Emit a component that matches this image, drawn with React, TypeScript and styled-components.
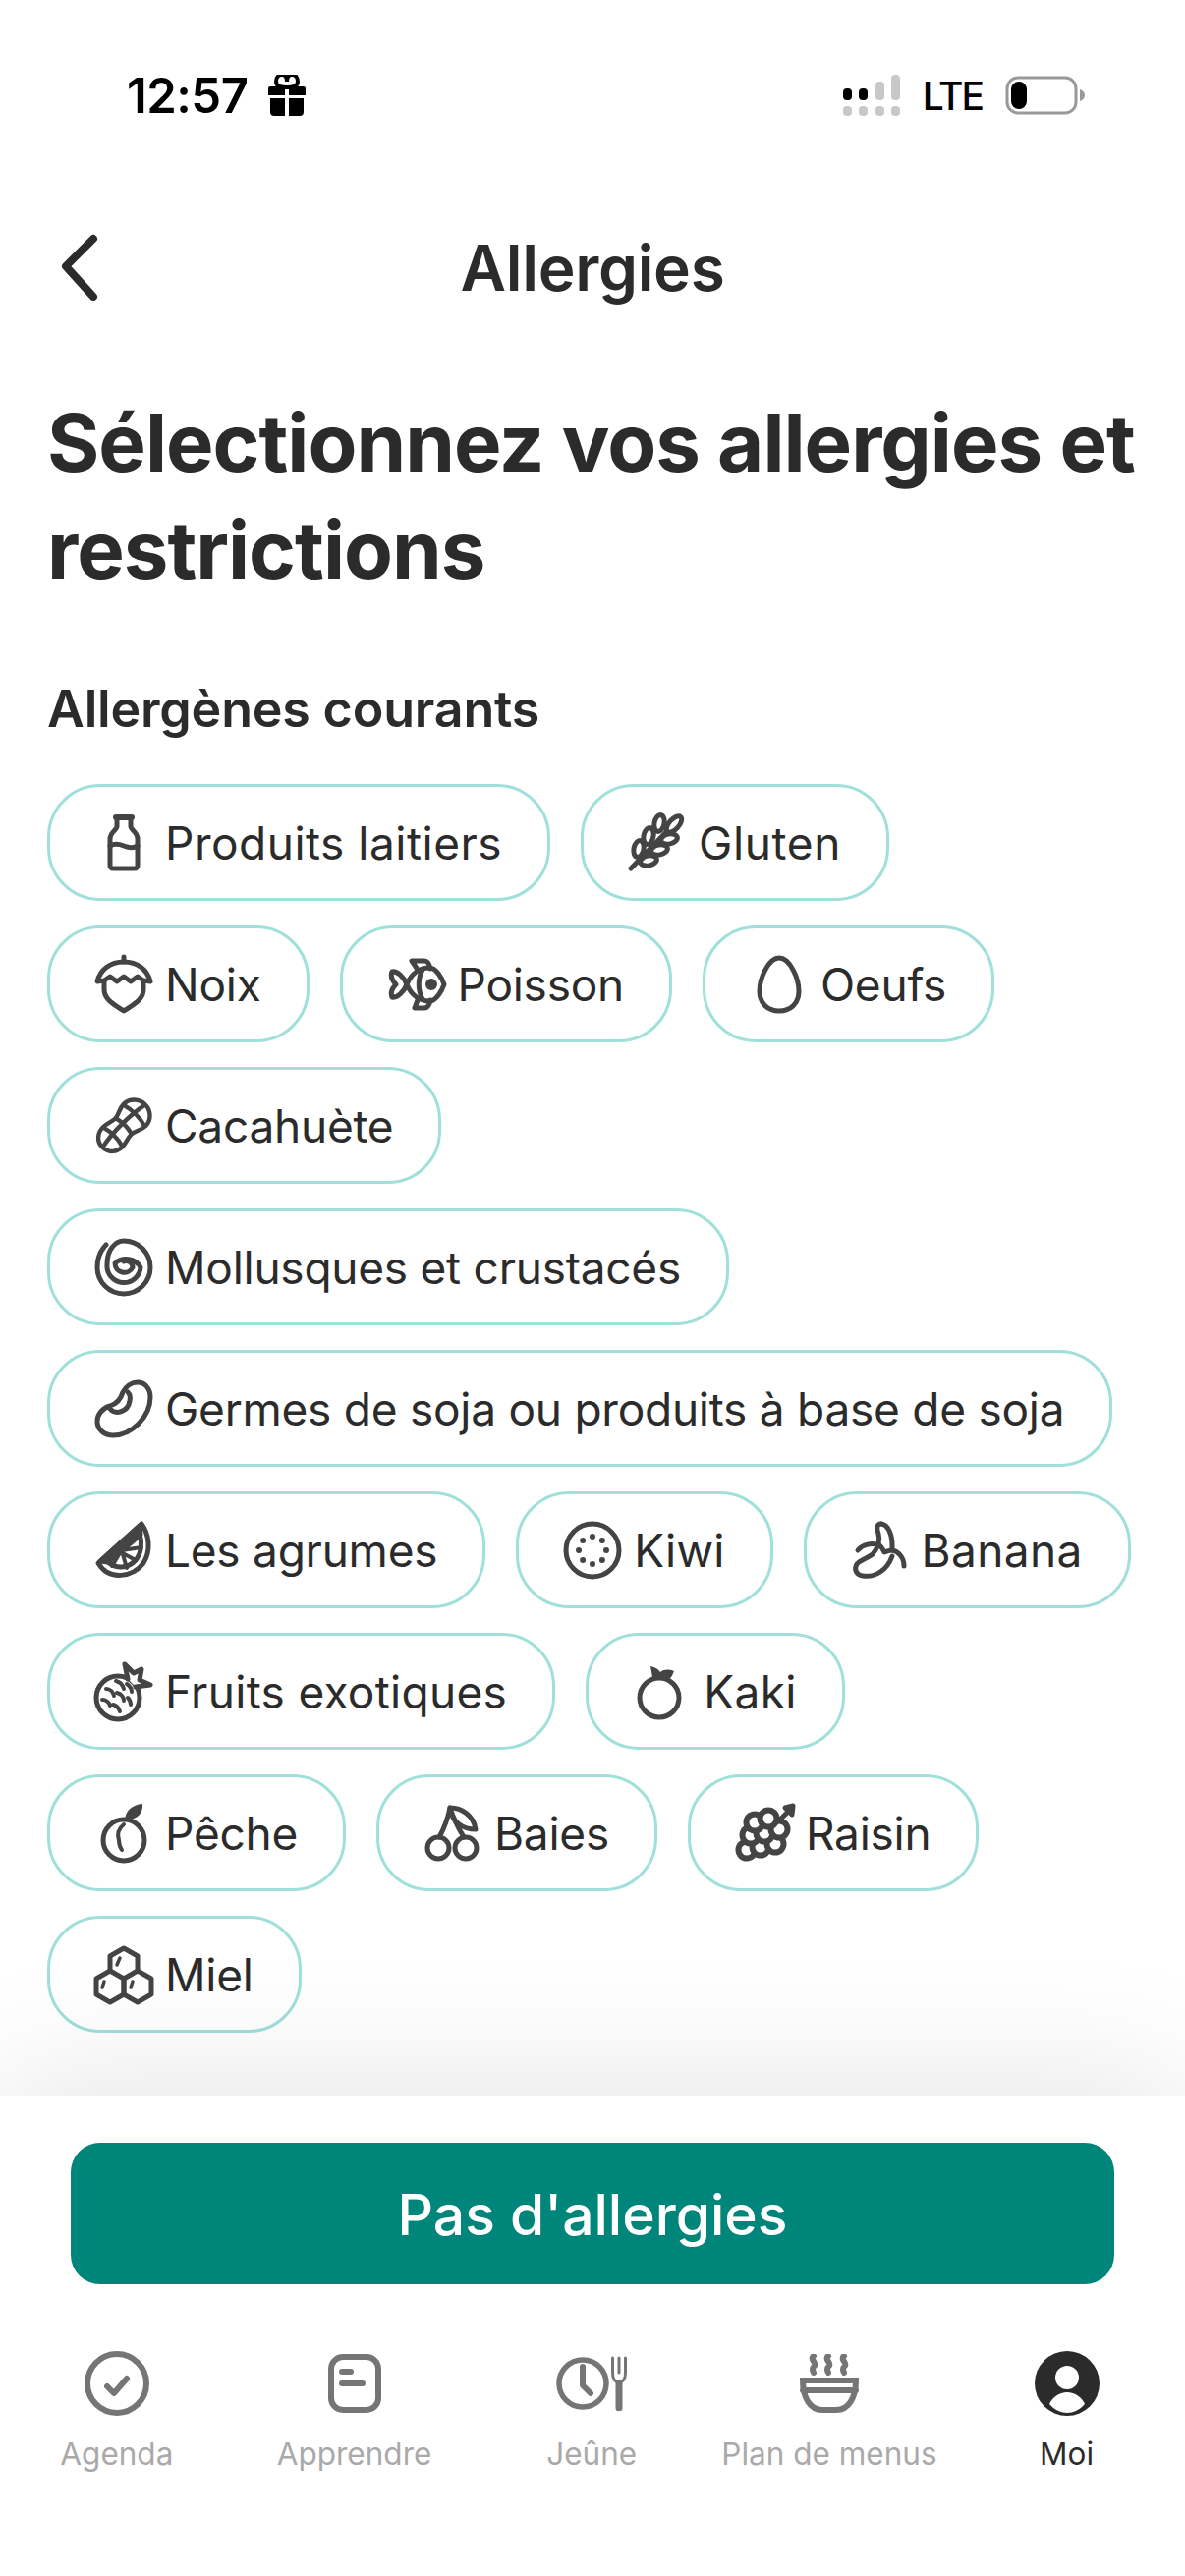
import * as React from 'react';
import styled, { createGlobalStyle } from 'styled-components';

const GlobalStyle = createGlobalStyle`
	html, body {
		margin: 0;
		padding: 0;
		background: #fff;
		font-family: Inter, "Liberation Sans", sans-serif;
	}
`;

const Page = styled.div`
	width: 1206px;
	height: 2622px;
	display: flex;
	flex-direction: column;
	overflow: hidden;
	background: #fff;
	color: #2b2b2b;
`;

const StatusBar = styled.div`
	height: 212px;
	box-sizing: border-box;
	padding: 76px 101px 0 129px;
	display: flex;
	justify-content: space-between;
	align-items: flex-start;
	color: #000;
`;

const StatusGroup = styled.div`
	display: flex;
	align-items: center;
	height: 42px;
`;

const Time = styled.span`
	font-size: 49px;
	font-weight: 600;
	letter-spacing: -0.5px;
	margin-right: 20px;
`;

const Carrier = styled.span`
	font-size: 39px;
	font-weight: 500;
	letter-spacing: -2px;
	margin: 0 23px 0 23px;
`;

const Header = styled.div`
	height: 120px;
	padding: 0 48px;
	display: flex;
	align-items: center;
	justify-content: center;
	position: relative;
`;

const BackButton = styled.svg`
	position: absolute;
	left: 60px;
	top: 26px;
`;

const HeaderTitle = styled.h1`
	margin: 0;
	font-size: 64px;
	font-weight: 600;
	letter-spacing: -0.3px;
`;

const Content = styled.div`
	flex: 1;
	min-height: 0;
	padding: 64px 48px 0;
`;

const Title = styled.h2`
	margin: 0;
	font-size: 81.5px;
	line-height: 109px;
	font-weight: 700;
	letter-spacing: -1px;
`;

const SectionTitle = styled.h3`
	margin: 73px 0 41px;
	font-size: 52px;
	line-height: 70px;
	font-weight: 600;
	letter-spacing: -0.2px;
`;

const ChipList = styled.div`
	display: flex;
	flex-wrap: wrap;
	gap: 25px 31px;
`;

const Chip = styled.div`
	height: 119px;
	box-sizing: border-box;
	padding: 0 46px 0 45px;
	display: flex;
	align-items: center;
	gap: 12px;
	border: 3px solid #a0e0da;
	border-radius: 54px;
	font-size: 46px;
	white-space: nowrap;
`;

const ChipLabel = styled.span<{ $tracking?: number }>`
	letter-spacing: ${props => props.$tracking ?? -0.25}px;
`;

const ChipIcon = styled.svg.attrs({ viewBox: '0 0 60 60', width: 60, height: 60, fill: 'none' })`
	flex: none;
	stroke: #444;
	stroke-width: 5;
	stroke-linecap: round;
	stroke-linejoin: round;
	overflow: visible;
`;

const Footer = styled.div`
	position: relative;
	height: 489px;
	box-sizing: border-box;
	padding-top: 48px;
	background: #fff;
	box-shadow: 0 0 140px rgba(0, 0, 0, 0.126);
`;

const MainButton = styled.button`
	display: block;
	width: 1062px;
	height: 144px;
	margin: 0 auto;
	padding: 2px 0 0;
	border: 0;
	border-radius: 30px;
	background: #00857a;
	color: #fff;
	font-family: inherit;
	font-size: 57px;
	font-weight: 500;
`;

const TabBar = styled.div`
	display: grid;
	grid-template-columns: repeat(5, 241.7px);
	margin-left: -2px;
	padding-top: 68px;
`;

const Tab = styled.div<{ $active?: boolean }>`
	display: flex;
	flex-direction: column;
	align-items: center;
	color: ${props => props.$active ? '#2b2b2b' : '#a9a9a9'};
	font-size: 31.5px;
	line-height: 40px;
`;

const TabIconBox = styled.div`
	height: 66px;
	display: flex;
	align-items: center;
	justify-content: center;
	margin-bottom: 19px;
`;

const TabStroke = styled.svg`
	fill: none;
	stroke: #757575;
	stroke-width: 6;
	stroke-linecap: round;
	stroke-linejoin: round;
`;

const Dim = '#444';

const Bottle = () => (
	<ChipIcon>
		<path d="M22 4h16" strokeWidth="6" />
		<path d="M23 5v8c0 4-7 6-7 13v27a3 3 0 0 0 3 3h22a3 3 0 0 0 3-3V26c0-7-7-9-7-13V5" />
		<path d="M16 33c5-3 9-2 14 0s9 3 14 0" />
	</ChipIcon>
);

const Wheat = () => {
	const leftRow = [[11, 36], [21, 23], [32, 10]];
	const rightRow = [[21, 48], [32, 37], [42, 26]];
	return (
		<ChipIcon>
			<path d="M3 56 40 18" />
			{leftRow.map(([x, y]) => (
				<ellipse key={`l${x}`} cx={x} cy={y} rx="5" ry="8.500" fill="#fff" transform={`rotate(12 ${x} ${y})`} />
			))}
			{rightRow.map(([x, y]) => (
				<ellipse key={`r${x}`} cx={x} cy={y} rx="8.500" ry="5" fill="#fff" transform={`rotate(-12 ${x} ${y})`} />
			))}
			<ellipse cx="47" cy="11" rx="5" ry="10" fill="#fff" transform="rotate(42 47 11)" />
		</ChipIcon>
	);
};

const Nut = () => (
	<ChipIcon>
		<path d="M30 2v5" />
		<path d="M3 27C6 15 16 7 30 7s24 8 27 20l-7-1-6-4-7 5-7-5-7 5-7-5-6 4Z" />
		<path d="M10 27v8c0 11 11 16 20 22 9-6 20-11 20-22v-8" />
	</ChipIcon>
);

const Fish = () => (
	<ChipIcon>
		<path d="M20 30C25 18 34 13 43 13c7 0 13 11 15 17-2 6-8 17-15 17-9 0-18-5-23-17Z" />
		<path d="M36 15c-5 9-5 21 0 30" />
		<circle cx="45" cy="30" r="3.500" fill={Dim} />
		<path d="M20 30C17 22 10 16 5 17c-2 5 0 9 4 13-4 4-6 8-4 13 5 1 12-5 15-13Z" />
		<path d="M31 15 25 6h13c3 0 5 3 6 8" />
		<path d="M31 46l-3 8h10c3 0 5-3 6-8" />
	</ChipIcon>
);

const Egg = () => (
	<ChipIcon>
		<path d="M30 3C19 3 10 24 10 37c0 13 9 20 20 20s20-7 20-20C50 24 41 3 30 3Z" />
	</ChipIcon>
);

const Peanut = () => (
	<ChipIcon>
		<g transform="translate(30 30) rotate(-45) scale(.88) translate(-30 -30)">
			<path d="M-5 30C-5 20 3 14 12 14c6 0 11 3 17 3s11-5 19-5c9 0 17 8 17 18s-8 18-17 18c-8 0-13-5-19-5s-11 3-17 3C3 46-5 40-5 30Z" />
			<path d="M-4 30C15 26 45 26 64 30" />
			<path d="M12 15c3 10 3 20 0 30" />
			<path d="M30 18c2 8 2 16 0 24" />
			<path d="M47 13c3 11 3 23 0 34" />
		</g>
	</ChipIcon>
);

const Shell = () => (
	<ChipIcon>
		<path d="M12 7C6 13 3 21 3 30A27 27 0 0 0 57 30C57 15 45 3 30 3 22 3 13 11 13 27A17 17 0 0 0 47 30 17 17 0 0 0 21 26 9.500 9.500 0 0 0 39 30C39 26 35 22 30 24" />
	</ChipIcon>
);

const Bean = () => (
	<ChipIcon>
		<path d="M29 13C32 7 38 3 44 3c8 0 13 7 13 15 0 20-19 39-38 39-9 0-16-6-16-14 0-8 6-14 13-16 6-2 11-7 13-14Z" />
		<path d="M16 30c5 6 18 4 20-8 1-4 0-7-2-9" />
	</ChipIcon>
);

const Citrus = () => (
	<ChipIcon>
		<path d="M4 43 48 3c8 11 10 27 2 40C40 57 15 62 4 43Z" />
		<path d="M14 42 46 13c3 9 2 20-4 27-8 9-20 9-28 2Z" />
		<path d="M6 41 46 5l1 9-33 28Z" fill={Dim} />
		<path d="M27 32 42 40M28 31 33 48M28 30 48 27M27 31 18 46" strokeWidth="4" />
	</ChipIcon>
);

const Kiwi = () => {
	const dots = [0, 45, 90, 135, 180, 225, 270, 315];
	return (
		<ChipIcon strokeWidth="5.500">
			<circle cx="30" cy="30" r="27" />
			{dots.map(a => (
				<circle
					key={a}
					cx={30 + 14 * Math.cos(a * Math.PI / 180)}
					cy={30 + 14 * Math.sin(a * Math.PI / 180)}
					r="3"
					fill={Dim}
					stroke="none"
				/>
			))}
		</ChipIcon>
	);
};

const Banana = () => (
	<ChipIcon>
		<path d="M31 3c-5 0-5 5-3 10 2 7-1 15-6 21-5 4-13 6-16 10-3 5-1 11 6 12 13 2 25-6 30-20" />
		<path d="M31 3c7 1 11 11 11 22 0 2 0 3 0 5 6 1 12 7 12 16" />
		<path d="M7 30c5-6 14-8 22-5 2 1 4 5 5 7 3-1 5-2 8-2" />
	</ChipIcon>
);

const Exotic = () => (
	<ChipIcon strokeWidth="4.500">
		<circle cx="24" cy="36" r="22" />
		<path d="M34 17 31 2l9 9 8-4-2 11 11 5-15 2" fill="#fff" />
		<path d="M22 19c4 1 7 4 8 8M33 22c3 2 5 5 5 8M12 27c4 0 7 3 8 7M23 31c4 1 7 4 7 8M34 36c2 2 3 4 3 7M8 38c4 0 7 3 8 6M19 43c4 1 6 4 7 7" strokeWidth="4" />
	</ChipIcon>
);

const Kaki = () => (
	<ChipIcon>
		<circle cx="27" cy="36" r="20" />
		<path d="M18 4c5 1 8 3 10 6 4-3 9-3 14-1-2 5-4 8-7 10-5-2-11-2-15 0 0-5-1-10-2-15Z" fill={Dim} stroke="none" />
	</ChipIcon>
);

const Peach = () => (
	<ChipIcon>
		<circle cx="30" cy="37" r="21" />
		<path d="M25 37c-2-6 0-12 5-16M25 37c0 4 1 7 3 10" strokeWidth="4" />
		<path d="M31 16C32 7 38 1 49 0c1 9-5 17-18 16Z" fill={Dim} stroke="none" />
	</ChipIcon>
);

const Cherries = () => (
	<ChipIcon>
		<circle cx="15" cy="45" r="11" />
		<circle cx="43" cy="45" r="11" />
		<path d="M16 34C21 25 25 14 27 4c3 10 8 20 14 30" />
		<path d="M27 4c12 0 24 8 26 22-12 0-24-6-26-22Z" />
	</ChipIcon>
);

const Grapes = () => {
	const holes = [[12, 47], [26, 44], [41, 41], [16, 32], [30, 30], [45, 26], [20, 19], [34, 15]];
	return (
		<ChipIcon>
			<path d="M47 15 58 4" />
			<path d="M51 4l8-2-1 9Z" fill={Dim} />
			{holes.map(([x, y]) => <circle key={`${x}-${y}`} cx={x} cy={y} r="8.500" fill="#fff" strokeWidth="6" />)}
		</ChipIcon>
	);
};

const Honey = () => (
	<ChipIcon strokeLinejoin="miter">
		<path d="M30 3 44 11V26L30 34 16 26V11Z" />
		<path d="M16 26 2 34V50L16 58 30 50V34" />
		<path d="M44 26 58 34V50L44 58 30 50V34" />
		<path d="M26 13 23 20M10 37 8 43M39 37 37 43" strokeWidth="3.500" />
	</ChipIcon>
);

const allergens: { label: string; Icon: () => React.ReactElement; tracking?: number }[] = [
	{ label: 'Produits laitiers', Icon: Bottle, tracking: 0.5 },
	{ label: 'Gluten', Icon: Wheat, tracking: 0.6 },
	{ label: 'Noix', Icon: Nut },
	{ label: 'Poisson', Icon: Fish },
	{ label: 'Oeufs', Icon: Egg },
	{ label: 'Cacahuète', Icon: Peanut },
	{ label: 'Mollusques et crustacés', Icon: Shell },
	{ label: 'Germes de soja ou produits à base de soja', Icon: Bean },
	{ label: 'Les agrumes', Icon: Citrus },
	{ label: 'Kiwi', Icon: Kiwi, tracking: 0.2 },
	{ label: 'Banana', Icon: Banana, tracking: 0.35 },
	{ label: 'Fruits exotiques', Icon: Exotic, tracking: 0.3 },
	{ label: 'Kaki', Icon: Kaki, tracking: 0.4 },
	{ label: 'Pêche', Icon: Peach },
	{ label: 'Baies', Icon: Cherries },
	{ label: 'Raisin', Icon: Grapes },
	{ label: 'Miel', Icon: Honey },
];

const Gift = () => (
	<svg width="40" height="42" viewBox="0 0 40 42">
		<path d="M20 13C15 13 9 12 9 7s3-7 6-7c3 0 5 3 5 7 0-4 2-7 5-7s6 2 6 7-6 6-11 6Z" fill="none" stroke="#000" strokeWidth="4" />
		<path d="M3 12h15v9H1v-7a2 2 0 0 1 2-2ZM22 12h15a2 2 0 0 1 2 2v7H22ZM3 24h15v18H7a4 4 0 0 1-4-4ZM22 24h15v14a4 4 0 0 1-4 4H22Z" fill="#000" />
	</svg>
);

const Signal = () => (
	<svg width="58" height="42" viewBox="0 0 58 42">
		<rect x="0" y="14" width="9" height="12" rx="4" fill="#000" />
		<rect x="16" y="14" width="9" height="12" rx="4" fill="#000" />
		<rect x="33" y="7" width="9" height="19" rx="4" fill="#c8c8c8" />
		<rect x="49" y="0" width="9" height="26" rx="4" fill="#c8c8c8" />
		<rect x="0" y="32" width="9" height="10" rx="4" fill="#c8c8c8" />
		<rect x="16" y="32" width="9" height="10" rx="4" fill="#c8c8c8" />
		<rect x="33" y="32" width="9" height="10" rx="4" fill="#c8c8c8" />
		<rect x="49" y="32" width="9" height="10" rx="4" fill="#c8c8c8" />
	</svg>
);

const Battery = () => (
	<svg width="82" height="42" viewBox="0 0 82 42">
		<rect x="2" y="3" width="70" height="36" rx="11" fill="none" stroke="#999" strokeWidth="3" />
		<rect x="6" y="7" width="16" height="28" rx="8" fill="#000" />
		<path d="M76 15c3 1 5 3 5 6s-2 5-5 6Z" fill="#999" />
	</svg>
);

const AgendaIcon = () => (
	<TabStroke width="66" height="66" viewBox="0 0 66 66">
		<circle cx="33" cy="33" r="30" />
		<path d="M23 36l7 7 13-15" />
	</TabStroke>
);

const LearnIcon = () => (
	<TabStroke width="54" height="60" viewBox="0 0 54 60">
		<rect x="3" y="3" width="48" height="54" rx="12" />
		<path d="M14 18h9M14 30h21" />
	</TabStroke>
);

const FastIcon = () => (
	<TabStroke width="72" height="56" viewBox="0 0 72 56">
		<circle cx="27" cy="28" r="24" strokeWidth="5.500" />
		<path d="M27 11v19l8 8" />
		<path d="M64 28v25" strokeWidth="7" />
		<path d="M57.500 2v15c0 7 3 10 6.500 10s6.500-3 6.500-10V2M64 2v15" strokeWidth="3" />
	</TabStroke>
);

const MenuIcon = () => (
	<TabStroke width="60" height="60" viewBox="0 0 60 60">
		<path d="M14 2c-5 4 5 7 0 11-2 2-1 4 0 6M29 2c-5 4 5 7 0 11-2 2-1 4 0 6M45 2c-5 4 5 7 0 11-2 2-1 4 0 6" />
		<path d="M3 27h54c0 17-7 30-20 30H23C10 57 3 44 3 27ZM3 37h54" strokeLinejoin="miter" />
	</TabStroke>
);

const ProfileIcon = () => (
	<svg width="66" height="66" viewBox="0 0 66 66">
		<circle cx="33" cy="33" r="33" fill="#2b2b2b" />
		<circle cx="33" cy="27" r="12" fill="#fff" />
		<path d="M15 54c3-7 10-12 18-12s15 5 18 12c-5 6-12 9-18 9s-13-3-18-9Z" fill="#fff" />
	</svg>
);

const tabs = [
	{ label: 'Agenda', Icon: AgendaIcon },
	{ label: 'Apprendre', Icon: LearnIcon },
	{ label: 'Jeûne', Icon: FastIcon },
	{ label: 'Plan de menus', Icon: MenuIcon },
	{ label: 'Moi', Icon: ProfileIcon, active: true },
];

const App = () => (
	<Page>
		<GlobalStyle />
		<StatusBar>
			<StatusGroup>
				<Time>12:57</Time>
				<Gift />
			</StatusGroup>
			<StatusGroup>
				<Signal />
				<Carrier>LTE</Carrier>
				<Battery />
			</StatusGroup>
		</StatusBar>
		<Header>
			<BackButton width="44" height="68" viewBox="0 0 44 68" fill="none" stroke="#2b2b2b" strokeWidth="8" strokeLinecap="round" strokeLinejoin="round">
				<path d="M35 5 7 33l28 31" />
			</BackButton>
			<HeaderTitle>Allergies</HeaderTitle>
		</Header>
		<Content>
			<Title>Sélectionnez vos allergies et restrictions</Title>
			<SectionTitle>Allergènes courants</SectionTitle>
			<ChipList>
				{allergens.map(({ label, Icon, tracking }) => (
					<Chip key={label}>
						<Icon />
						<ChipLabel $tracking={tracking}>{label}</ChipLabel>
					</Chip>
				))}
			</ChipList>
		</Content>
		<Footer>
			<MainButton>Pas d'allergies</MainButton>
			<TabBar>
				{tabs.map(({ label, Icon, active }) => (
					<Tab key={label} $active={active}>
						<TabIconBox><Icon /></TabIconBox>
						<span>{label}</span>
					</Tab>
				))}
			</TabBar>
		</Footer>
	</Page>
);

export default App;
